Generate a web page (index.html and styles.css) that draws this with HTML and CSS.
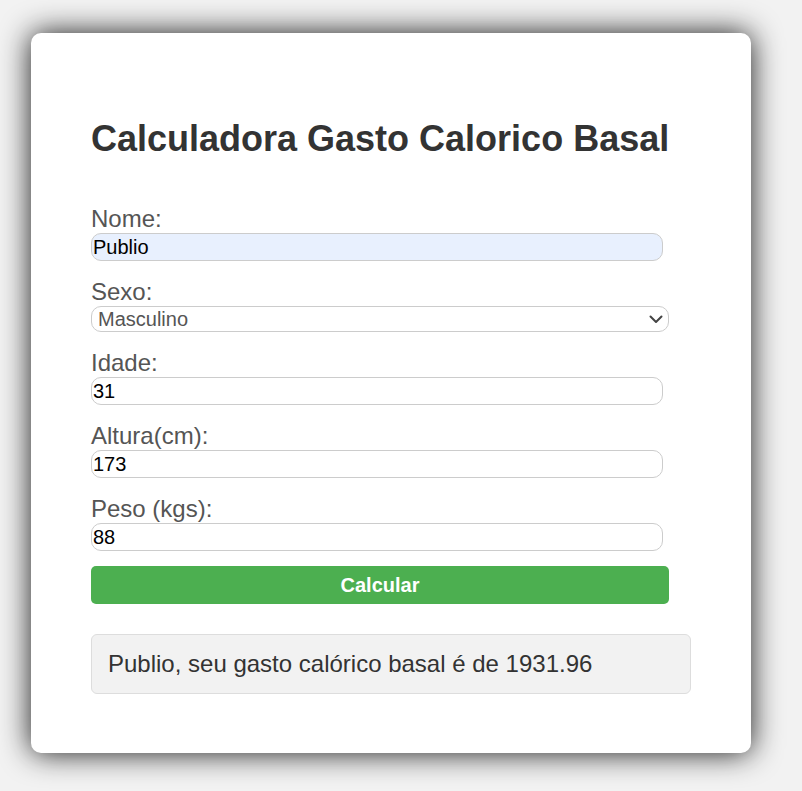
FILE: index.html
```html
<!DOCTYPE html>
<html lang="pt">
<head>
<meta charset="utf-8">
<title>Calculadora Gasto Calorico Basal</title>
<link rel="stylesheet" href="styles.css">
</head>
<body>
<div class="card">
  <h1 class="title">Calculadora Gasto Calorico Basal</h1>
  <form class="form">
    <label class="label" for="nome">Nome:</label>
    <input class="field autofill" id="nome" type="text" value="Publio">
    <label class="label" for="sexo">Sexo:</label>
    <div class="select-wrap">
      <select class="select" id="sexo">
        <option>Masculino</option>
        <option>Feminino</option>
      </select>
      <svg class="chevron" width="14" height="9" viewBox="0 0 14 9"><path d="M1.5 1.5 L7 7 L12.5 1.5" fill="none" stroke="#444" stroke-width="2" stroke-linecap="round" stroke-linejoin="round"/></svg>
    </div>
    <label class="label" for="idade">Idade:</label>
    <input class="field" id="idade" type="text" value="31">
    <label class="label" for="altura">Altura(cm):</label>
    <input class="field" id="altura" type="text" value="173">
    <label class="label" for="peso">Peso (kgs):</label>
    <input class="field" id="peso" type="text" value="88">
    <button class="btn" type="button">Calcular</button>
  </form>
  <div class="result">Publio, seu gasto calórico basal é de 1931.96</div>
</div>
</body>
</html>
```
FILE: styles.css
```css
html, body {
  margin: 0;
  padding: 0;
}
body {
  background: #f2f2f2;
  font-family: "Liberation Sans", Arial, sans-serif;
  padding: 33px 0 40px 31px;
}
.card {
  width: 600px;
  background: #fff;
  border-radius: 10px;
  padding: 60px 60px 59px;
  box-shadow: 0 0 30px rgba(0, 0, 0, 0.9);
}
.title {
  font-size: 36px;
  line-height: 41px;
  font-weight: bold;
  color: #333;
  margin: 25px 0 46px;
}
.form {
  display: flex;
  flex-direction: column;
  align-items: flex-start;
}
.label {
  display: block;
  font-size: 24px;
  line-height: 28px;
  color: #555;
}
.field {
  box-sizing: border-box;
  width: 572px;
  height: 28px;
  margin: 0 0 17px;
  padding: 0 1px;
  border: 1px solid #ccc;
  border-radius: 10px;
  font-family: "Liberation Sans", Arial, sans-serif;
  font-size: 20px;
  color: #000;
  background: #fff;
  outline: none;
}
.autofill {
  background: #e8f0fe;
}
.select-wrap {
  position: relative;
  width: 578px;
  height: 26px;
  margin: 0 0 17px;
}
.select {
  box-sizing: border-box;
  width: 100%;
  height: 26px;
  padding: 0 6px;
  border: 1px solid #ccc;
  border-radius: 10px;
  font-family: "Liberation Sans", Arial, sans-serif;
  font-size: 20px;
  color: #555;
  background: #fff;
  appearance: none;
  -webkit-appearance: none;
  outline: none;
}
.chevron {
  position: absolute;
  right: 6px;
  top: 9px;
  pointer-events: none;
}
.btn {
  width: 578px;
  height: 38px;
  margin-top: -2px;
  border: none;
  border-radius: 5px;
  background: #4caf50;
  color: #fff;
  font-family: "Liberation Sans", Arial, sans-serif;
  font-size: 20px;
  font-weight: bold;
  padding: 0;
}
.result {
  box-sizing: border-box;
  margin-top: 30px;
  height: 60px;
  padding: 0 16px;
  border: 1px solid #ddd;
  border-radius: 6px;
  background: #f2f2f2;
  color: #333;
  font-size: 24px;
  line-height: 58px;
}
```
